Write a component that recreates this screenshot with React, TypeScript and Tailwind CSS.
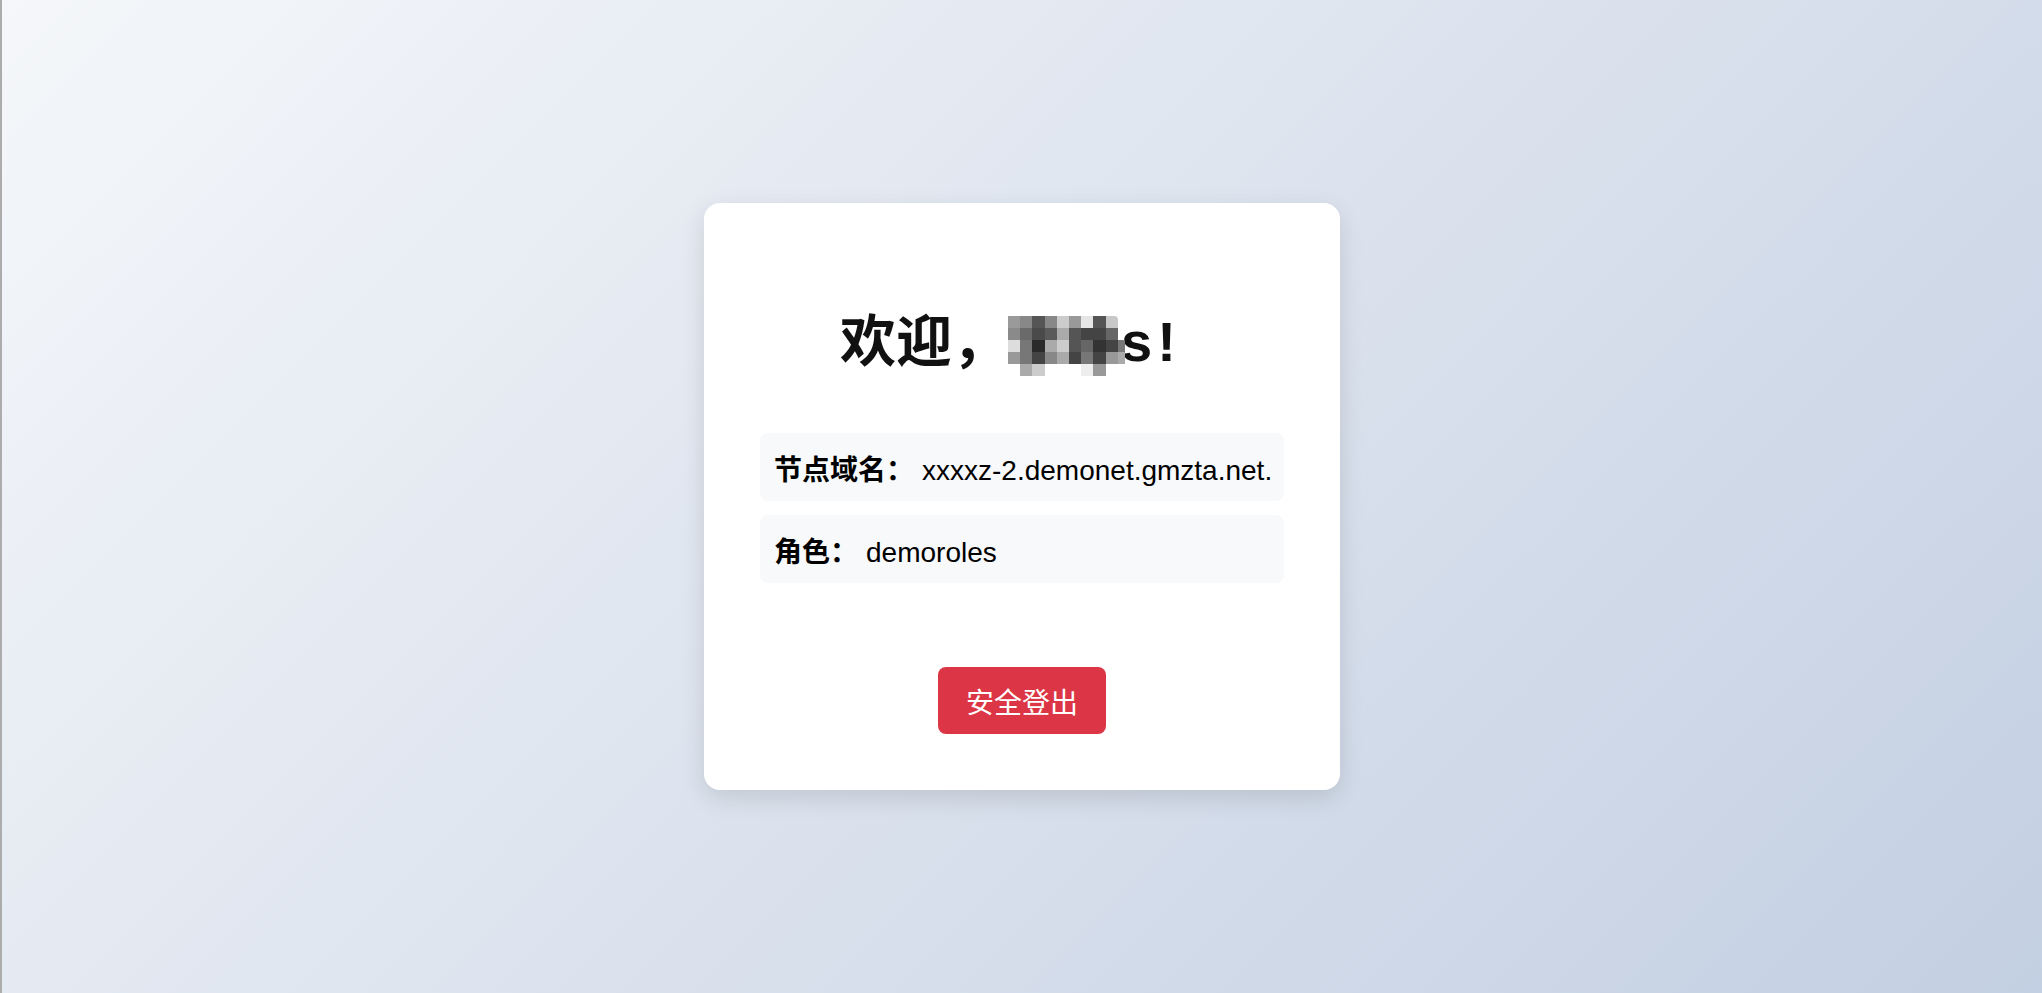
import React from "react";

const N = null;
const mosaic: (string | null)[][] = [
  ["#9a9a9a", "#888888", "#555555", "#888888", "#cccccc", "#999999", "#e5e5e5", "#555555", "#c8c8c8", N],
  ["#8a8a8a", "#6a6a6a", "#4a4a4a", "#5a5a5a", "#aaaaaa", "#555555", "#444444", "#444444", "#666666", N],
  ["#dddddd", "#777777", "#2a2a2a", "#aaaaaa", "#cccccc", "#555555", "#666666", "#333333", "#444444", "#777777"],
  ["#999999", "#777777", "#444444", "#888888", "#aaaaaa", "#444444", "#777777", "#444444", "#999999", "#aaaaaa"],
  [N, "#aaaaaa", "#cccccc", N, N, N, "#eeeeee", "#999999", N, N],
];

function Mosaic() {
  return (
    <span className="relative inline-block w-[113px] h-[60px] translate-y-[4px] shrink-0">
      <span className="grid grid-cols-[repeat(9,12.2px)_7px] grid-rows-[repeat(5,12px)] w-max">
        {mosaic.flatMap((row, r) =>
          row.map((c, i) => (
            <span
              key={`${r}-${i}`}
              className={`block ${r === 0 && i === 8 ? "rounded-tr-[4px]" : ""}`}
              style={{ backgroundColor: c ?? "transparent" }}
            />
          ))
        )}
      </span>
    </span>
  );
}

export default function App() {
  return (
    <div className="flex h-screen w-full overflow-hidden bg-[linear-gradient(135deg,#f5f7fa_0%,#c3cfe2_100%)]">
      <div className="w-[2px] h-full bg-[#acacac] shrink-0" />
      <div className="flex flex-1 items-center justify-center">
        <div className="w-[636px] bg-white rounded-2xl p-[56px] shadow-[0_8px_24px_rgba(0,0,0,0.12)] flex flex-col items-center">
          <h1 className="mt-[49px] mb-[58px] h-[67px] flex items-center justify-center pr-[28px] text-[56px] leading-[67px] font-bold text-[#111] whitespace-nowrap [font-family:'Liberation_Sans','Noto_Sans_CJK_SC',sans-serif]">
            <span>欢迎，</span>
            <Mosaic />
            <span>s</span>
            <span className="ml-[5px]">!</span>
          </h1>
          <div className="w-full flex flex-col gap-[14px]">
            <div className="h-[68px] flex items-center pl-[14px] pt-[7px] bg-[#f8f9fa] rounded-lg whitespace-nowrap text-[28px] text-black [font-family:'Liberation_Sans','Noto_Sans_CJK_SC',sans-serif]">
              <span className="font-bold">节点域名：</span>
              <span className="ml-[8px]">xxxxz-2.demonet.gmzta.net.</span>
            </div>
            <div className="h-[68px] flex items-center pl-[14px] pt-[7px] bg-[#f8f9fa] rounded-lg whitespace-nowrap text-[28px] text-black [font-family:'Liberation_Sans','Noto_Sans_CJK_SC',sans-serif]">
              <span className="font-bold">角色：</span>
              <span className="ml-[8px]">demoroles</span>
            </div>
          </div>
          <button className="mt-[84px] h-[67px] px-[28px] rounded-lg bg-[#dc3545] text-white text-[28px] leading-none [font-family:'Noto_Sans_CJK_SC',sans-serif]">
            安全登出
          </button>
        </div>
      </div>
    </div>
  );
}
